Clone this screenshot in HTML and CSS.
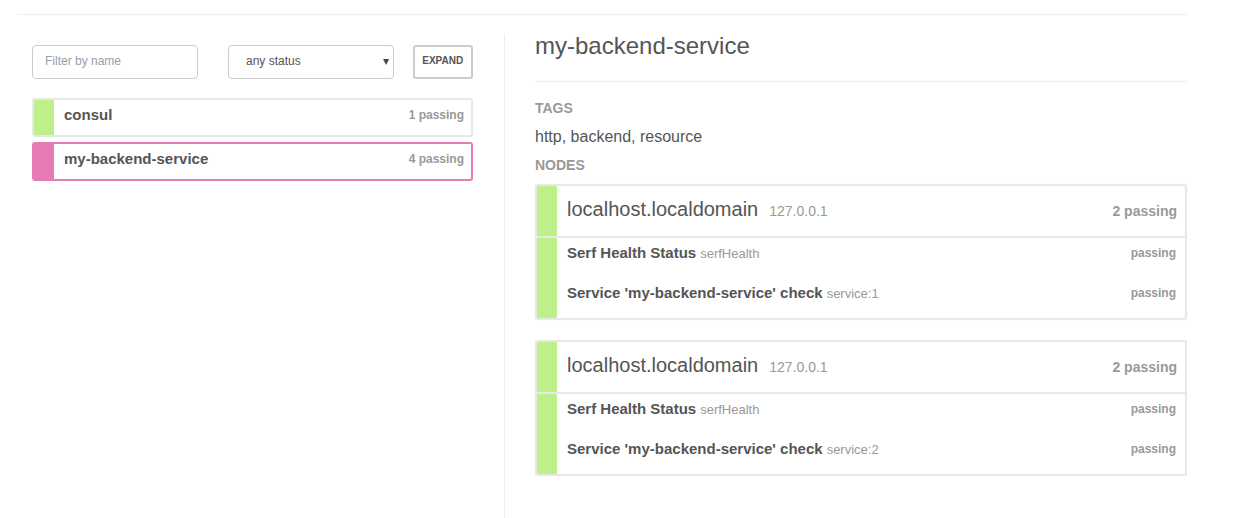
FILE: index.html
```html
<!DOCTYPE html>
<html>
<head>
<meta charset="utf-8">
<title>Consul</title>
<link rel="stylesheet" href="styles.css">
</head>
<body>
<div class="page">
  <div class="topbar"></div>
  <div class="row">
    <div class="col-left">
      <div class="controls">
        <input class="filter" type="text" placeholder="Filter by name">
        <div class="select-wrap">
          <select class="status"><option>any status</option></select>
          <span class="caret">▾</span>
        </div>
        <button class="expand">EXPAND</button>
      </div>
      <div class="service-list">
        <div class="service">
          <div class="bar green"></div>
          <div class="service-body">
            <span class="service-name">consul</span>
            <span class="service-count">1 passing</span>
          </div>
        </div>
        <div class="service active">
          <div class="bar pink"></div>
          <div class="service-body">
            <span class="service-name">my-backend-service</span>
            <span class="service-count">4 passing</span>
          </div>
        </div>
      </div>
    </div>
    <div class="col-right">
      <h3 class="title">my-backend-service</h3>
      <div class="rule"></div>
      <h5 class="label label-tags">TAGS</h5>
      <p class="tags">http, backend, resource</p>
      <h5 class="label label-nodes">NODES</h5>

      <div class="node">
        <div class="node-head">
          <div class="bar green"></div>
          <div class="node-head-body">
            <span class="node-name">localhost.localdomain</span>
            <span class="node-ip">127.0.0.1</span>
            <span class="node-count">2 passing</span>
          </div>
        </div>
        <div class="node-checks">
          <div class="bar green"></div>
          <div class="checks">
            <div class="check">
              <span class="check-name">Serf Health Status</span>
              <span class="check-id">serfHealth</span>
              <span class="check-status">passing</span>
            </div>
            <div class="check">
              <span class="check-name">Service 'my-backend-service' check</span>
              <span class="check-id">service:1</span>
              <span class="check-status">passing</span>
            </div>
          </div>
        </div>
      </div>

      <div class="node">
        <div class="node-head">
          <div class="bar green"></div>
          <div class="node-head-body">
            <span class="node-name">localhost.localdomain</span>
            <span class="node-ip">127.0.0.1</span>
            <span class="node-count">2 passing</span>
          </div>
        </div>
        <div class="node-checks">
          <div class="bar green"></div>
          <div class="checks">
            <div class="check">
              <span class="check-name">Serf Health Status</span>
              <span class="check-id">serfHealth</span>
              <span class="check-status">passing</span>
            </div>
            <div class="check">
              <span class="check-name">Service 'my-backend-service' check</span>
              <span class="check-id">service:2</span>
              <span class="check-status">passing</span>
            </div>
          </div>
        </div>
      </div>
    </div>
  </div>
</div>
</body>
</html>
```

FILE: styles.css
```css
* { box-sizing: border-box; }
html, body { margin: 0; padding: 0; background: #fff; }
body {
  font-family: "Liberation Sans", Arial, Helvetica, sans-serif;
  color: #555;
  overflow: hidden;
}
.page {
  width: 1187px;
  padding-left: 17px;
}
.topbar {
  height: 15px;
  border-bottom: 1px solid #eee;
}
.row {
  display: flex;
  margin-top: 19px;
  min-height: 490px;
}
.col-left {
  width: 488px;
  flex: none;
  padding: 11px 31px 0 15px;
  border-right: 1px solid #eee;
}
.controls {
  display: flex;
  height: 34px;
}
.filter {
  width: 166px;
  height: 34px;
  border: 1px solid #ccc;
  border-radius: 4px;
  padding: 0 12px 2px 12px;
  font-family: inherit;
  font-size: 12px;
  color: #555;
  outline: none;
}
.filter::placeholder { color: #9a9ea6; }
.select-wrap {
  position: relative;
  width: 167px;
  height: 34px;
  margin-left: 30px;
}
.status {
  -webkit-appearance: none;
  appearance: none;
  width: 100%;
  height: 34px;
  border: 1px solid #ccc;
  border-radius: 4px;
  background: #fff;
  padding: 0 17px 2px 17px;
  font-family: inherit;
  font-size: 12px;
  color: #555;
  outline: none;
}
.caret {
  position: absolute;
  right: 5px;
  top: 9px;
  font-size: 12px;
  color: #444;
  pointer-events: none;
}
.expand {
  width: 61px;
  height: 34px;
  margin-left: 19px;
  border: 2px solid #ccc;
  border-radius: 3px;
  background: #fff;
  padding: 0 0 3px 0;
  font-family: inherit;
  font-size: 10px;
  font-weight: bold;
  color: #555;
}
.service-list {
  margin-top: 19px;
}
.service {
  display: flex;
  height: 39px;
  border: 2px solid #e8e8e8;
  border-radius: 3px;
  margin-bottom: 5px;
  overflow: hidden;
}
.service.active {
  border-color: #e67ab2;
}
.bar {
  width: 20px;
  flex: none;
}
.bar.green { background: #bdf089; }
.bar.pink { background: #e67ab2; }
.service-body {
  flex: 1;
  display: flex;
  align-items: baseline;
  justify-content: space-between;
  padding: 5px 7px 0 10px;
}
.service-name {
  font-size: 15px;
  font-weight: bold;
  line-height: 20px;
  color: #555;
}
.service-count {
  font-size: 12px;
  font-weight: bold;
  color: #999;
  position: relative;
  top: -1px;
}
.col-right {
  flex: 1;
  padding-left: 30px;
}
.title {
  margin: 0;
  font-size: 24px;
  line-height: 24px;
  font-weight: normal;
  color: #555;
}
.rule {
  margin-top: 23px;
  border-top: 1px solid #eee;
}
.label {
  margin: 0;
  font-size: 14px;
  line-height: 20px;
  font-weight: bold;
  color: #999;
}
.label-tags { margin-top: 16px; }
.tags {
  margin: 8px 0 0 0;
  font-size: 16px;
  line-height: 22px;
  color: #555;
}
.label-nodes { margin-top: 7px; }
.node {
  margin-top: 9px;
  border: 2px solid #e8e8e8;
  border-radius: 3px;
  box-shadow: 0 0 1px rgba(0,0,0,0.05);
}
.node + .node { margin-top: 20px; }
.node-head {
  display: flex;
  height: 50px;
}
.node-head-body {
  flex: 1;
  display: flex;
  align-items: baseline;
  padding: 0 8px 0 10px;
}
.node-name {
  font-size: 20px;
  line-height: 47px;
  color: #555;
}
.node-ip {
  font-size: 14px;
  color: #999;
  margin-left: 11px;
}
.node-count {
  margin-left: auto;
  font-size: 14px;
  font-weight: bold;
  color: #999;
}
.node-checks {
  display: flex;
  border-top: 2px solid #e8e8e8;
}
.checks {
  flex: 1;
  padding: 0 9px 0 10px;
}
.check {
  display: flex;
  align-items: baseline;
  height: 40px;
  padding-top: 5px;
}
.check-name {
  font-size: 15px;
  line-height: 20px;
  font-weight: bold;
  color: #555;
}
.check-id {
  font-size: 13px;
  color: #999;
  margin-left: 4px;
}
.check-status {
  margin-left: auto;
  font-size: 12px;
  font-weight: bold;
  color: #999;
  position: relative;
  top: -1px;
}
```
